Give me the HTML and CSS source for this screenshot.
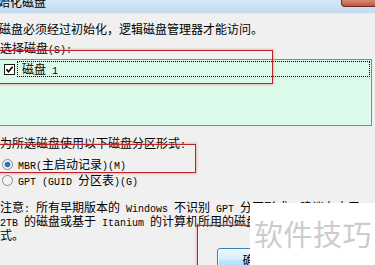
FILE: index.html
```html
<!DOCTYPE html>
<html lang="zh-CN">
<head>
<meta charset="utf-8">
<title>初始化磁盘</title>
<link rel="stylesheet" href="styles.css">
</head>
<body>
  <div class="dialog">
    <div class="titlebar">
      <span class="title">始化磁盘</span>
      <span class="close"></span>
    </div>

    <p class="intro">磁盘必须经过初始化，逻辑磁盘管理器才能访问。</p>
    <p class="label">选择磁盘<span class="lat">(S):</span></p>

    <div class="disk-list">
      <div class="disk-row">
        <svg class="check" width="11" height="11" viewBox="0 0 11 11">
          <rect x="0.5" y="0.5" width="10" height="10" fill="#fff" stroke="#1c1c1c"/>
          <path d="M2.5 5.2 L4.5 7.8 L8.6 2.8" fill="none" stroke="#000" stroke-width="1.6"/>
        </svg>
        <div class="disk-name">磁盘<span class="lat"> 1</span></div>
      </div>
    </div>

    <p class="label2">为所选磁盘使用以下磁盘分区形式<span class="lat">:</span></p>

    <div class="radio-row">
      <svg class="radio" width="11" height="11" viewBox="0 0 11 11">
        <circle cx="5.5" cy="5.5" r="5" fill="#f4f4f4" stroke="#8a8a8a"/>
        <circle cx="5.5" cy="5.5" r="2.8" fill="#2d6fc0"/>
      </svg>
      <span><span class="lat">MBR(</span>主启动记录<span class="lat">)(M)</span></span>
    </div>
    <div class="radio-row">
      <svg class="radio" width="11" height="11" viewBox="0 0 11 11">
        <circle cx="5.5" cy="5.5" r="5" fill="#f4f4f4" stroke="#8a8a8a"/>
      </svg>
      <span><span class="lat">GPT (GUID </span>分区表<span class="lat">)(G)</span></span>
    </div>

    <div class="note">
      <p>注意<span class="lat">: </span>所有早期版本的<span class="lat"> Windows </span>不识别<span class="lat"> GPT </span>分区形式。建议在大于</p>
      <p><span class="lat">2TB </span>的磁盘或基于<span class="lat"> Itanium </span>的计算机所用的磁盘上使用<span class="lat"> GPT </span>分区形</p>
      <p>式。</p>
    </div>

    <div class="buttons">
      <button class="btn">确定</button>
    </div>

    <!-- annotation boxes drawn over the dialog -->
    <div class="mark mark-list"></div>
    <div class="mark mark-radio"></div>
    <div class="mark mark-ok"></div>

    <div class="watermark">软件技巧</div>
  </div>
</body>
</html>
```

FILE: styles.css
```css
body {
  margin: 0;
  width: 375px;
  height: 265px;
  overflow: hidden;
  background: #f0f0f0;
  font-family: "Noto Sans CJK SC", sans-serif;
  font-size: 12px;
  color: #000;
}
p {
  margin: 0;
}
.lat {
  font-family: "Liberation Mono", monospace;
  font-size: 10px;
  line-height: 1;
}
.dialog {
  position: relative;
  width: 375px;
  height: 265px;
  overflow: hidden;
}
.titlebar {
  height: 14px;
  display: flex;
  justify-content: space-between;
  align-items: flex-start;
  background: linear-gradient(#d6e8f8, #c3dbf1 85%, #e4eff9);
  overflow: hidden;
}
.title {
  font-size: 12px;
  line-height: 14px;
  margin-top: -5px;
  margin-left: -2px;
  white-space: nowrap;
}
.close {
  width: 34px;
  height: 6px;
  margin-right: -2px;
  background: linear-gradient(#d98a74, #c0543c);
  border: 1px solid #6a2c20;
  border-top: none;
  border-radius: 0 0 0 4px;
}
.intro {
  margin-top: 8px;
  margin-left: -1px;
  line-height: 14px;
  white-space: nowrap;
}
.label {
  margin-top: 5px;
  line-height: 14px;
}
.disk-list {
  box-sizing: border-box;
  margin-top: 3px;
  margin-left: -1px;
  width: 373px;
  height: 67px;
  padding-top: 1px;
  background: #dcfaea;
  border: 1px solid #828790;
}
.disk-row {
  display: flex;
  align-items: center;
  margin-left: 1px;
}
.check {
  margin-left: 3px;
  margin-right: 2px;
  flex: none;
}
.disk-name {
  box-sizing: border-box;
  flex: 1;
  height: 16px;
  margin-right: 1px;
  padding-left: 4px;
  line-height: 14px;
  border: 1px dotted #000;
}
.label2 {
  margin-top: 10px;
  line-height: 14px;
  white-space: nowrap;
}
.radio-row {
  display: flex;
  align-items: center;
  height: 16px;
  line-height: 14px;
  white-space: nowrap;
}
.label2 + .radio-row {
  margin-top: 5px;
}
.radio {
  flex: none;
  margin-left: 2px;
  margin-right: 5px;
}
.note {
  margin-top: 13px;
  line-height: 12px;
  white-space: nowrap;
}
.buttons {
  margin-top: 7px;
  padding-left: 217px;
}
.btn {
  width: 75px;
  height: 23px;
  padding: 0;
  font-family: "Noto Sans CJK SC", sans-serif;
  font-size: 12px;
  color: #000;
  border: 1px solid #3c7fb1;
  border-radius: 3px;
  background: linear-gradient(#eaf6fd 0%, #d9f0fc 45%, #bee6fd 55%, #a7d9f5 100%);
  box-shadow: inset 0 0 0 1px rgba(255, 255, 255, 0.7);
}
.mark {
  position: absolute;
  border: 1px solid #b3262c;
  box-shadow: 0 0 2px 1px rgba(240, 110, 110, 0.45);
}
.mark-list {
  left: -2px;
  top: 50px;
  width: 273px;
  height: 32px;
}
.mark-radio {
  left: -2px;
  top: 144px;
  width: 196px;
  height: 27px;
}
.mark-ok {
  left: 197px;
  top: 225px;
  width: 200px;
  height: 60px;
}
.watermark {
  position: absolute;
  left: 250px;
  top: 203px;
  width: 125px;
  height: 62px;
  box-sizing: border-box;
  padding-top: 14px;
  padding-left: 4px;
  background: #fff;
  color: #cccccc;
  font-size: 29px;
  line-height: 32px;
  letter-spacing: 0.5px;
  white-space: nowrap;
}
```
